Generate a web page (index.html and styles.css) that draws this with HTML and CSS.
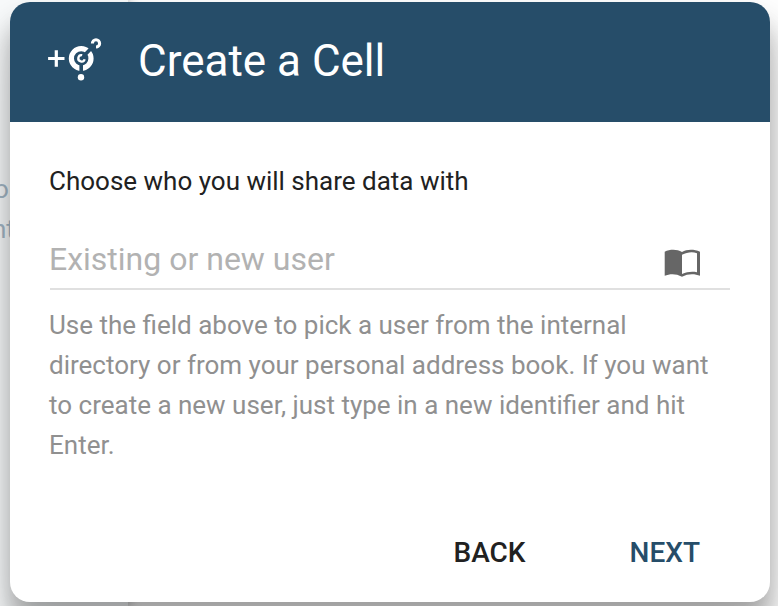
FILE: index.html
```html
<!DOCTYPE html>
<html lang="en">
<head>
<meta charset="utf-8">
<title>Create a Cell</title>
<link rel="stylesheet" href="styles.css">
</head>
<body>
<div class="backdrop"><span>or</span><span>nt</span></div>
<main class="dialog">
  <header class="header">
    <svg class="logo" width="60" height="50" viewBox="44 34 60 50" fill="none" stroke="#fff">
      <path d="M56.3 50.3v16.4M48.1 58.5h16.4" stroke-width="3.2"/>
      <circle cx="81.2" cy="58.4" r="9.8" stroke-width="5.2"/>
      <path class="gap" d="M81.2 64v10M84.5 55.2l11-11.4" stroke-width="3.6"/>
      <path d="M82.2 55.2a3.2 3.2 0 1 0 2.4 4" stroke-width="2.3"/>
      <path d="M92.4 43.4a3.6 3.6 0 1 1 3.6 3.6" stroke-width="3.1"/>
      <circle cx="81" cy="77.3" r="3.2" fill="#fff" stroke="none"/>
    </svg>
    <h1>Create a Cell</h1>
  </header>
  <section class="content">
    <h2>Choose who you will share data with</h2>
    <div class="field">
      <span>Existing or new user</span>
      <svg class="book" width="36" height="28" viewBox="0 0 36 28">
        <path fill="#666" fill-rule="evenodd" d="M18 3C13 .2 6 .2 .7 2.8v24c5-2 11.3-2.4 17.3 1 6-3.4 13-3 18-1v-24C30 .2 23 .2 18 3zM33 23.2c-5-1-10-.5-15 1.9V5.8c5-2.5 10-3.2 15-1.6z"/>
      </svg>
    </div>
    <p>Use the field above to pick a user from the internal<br>directory or from your personal address book. If you want<br>to create a new user, just type in a new identifier and hit<br>Enter.</p>
  </section>
  <footer class="actions"><button>BACK</button><button class="primary">NEXT</button></footer>
</main>
</body>
</html>
```
FILE: styles.css
```css
* { box-sizing: border-box; }
body {
  margin: 0;
  height: 606px;
  padding: 2px 8px 0 10px;
  overflow: hidden;
  background: #fff;
  font-family: Roboto, sans-serif;
}
.backdrop {
  position: absolute;
  z-index: -1;
  left: 0;
  top: 0;
  width: 128px;
  height: 606px;
  padding-top: 169px;
  display: flex;
  flex-direction: column;
  background: #f9fbfc;
  box-shadow: 0 0 12px rgba(0, 0, 0, .4);
  color: #a4b8c7;
  font-size: 26px;
  line-height: 40px;
}
.backdrop span { margin-left: -6px; }
.backdrop span + span { margin-left: -8px; }
.dialog {
  width: 760px;
  height: 600px;
  display: flex;
  flex-direction: column;
  overflow: hidden;
  border-radius: 20px;
  background: #fff;
  box-shadow: 0 28px 60px rgba(0, 0, 0, .16), 0 22px 24px rgba(0, 0, 0, .28);
}
.header {
  height: 120px;
  flex: none;
  display: flex;
  align-items: center;
  padding: 0 34px 4px;
  background: #264d69;
}
.logo { display: block; margin-top: -2px; }
.gap { stroke: #264d69; }
h1 {
  margin: 2px 0 0 34px;
  color: #fff;
  font-size: 44px;
  line-height: 64px;
  font-weight: 400;
}
.content { flex: 1; padding: 40px 40px 40px 39px; }
h2 {
  margin: 0;
  color: #212121;
  font-size: 26px;
  line-height: 39px;
  font-weight: 400;
}
.field {
  height: 64px;
  margin: 25px 0 15px 1px;
  padding: 4px 30px 0 0;
  display: flex;
  align-items: center;
  justify-content: space-between;
  border-bottom: 2px solid #e0e0e0;
  color: #b2b2b2;
  font-size: 32px;
}
.field span { margin-left: -1px; }
.book { margin-top: 8px; }
p {
  margin: 0;
  color: #909090;
  font-size: 26px;
  line-height: 40px;
  white-space: nowrap;
}
.actions {
  height: 71px;
  flex: none;
  display: flex;
  justify-content: flex-end;
  gap: 40px;
  padding: 0 38px 27px 0;
}
button {
  margin: 0;
  padding: 0 32px;
  border: 0;
  background: transparent;
  color: #212121;
  font: 500 28px/44px Roboto, sans-serif;
}
.primary { color: #264d69; }
```
